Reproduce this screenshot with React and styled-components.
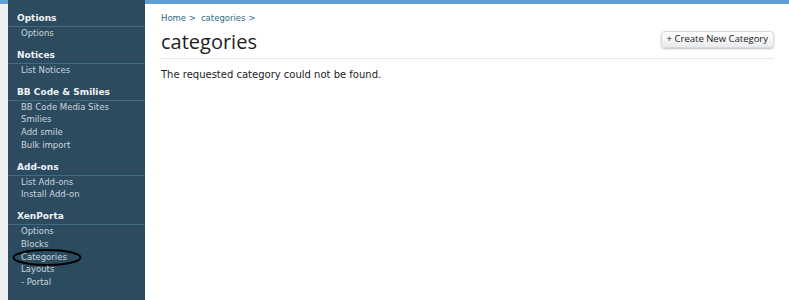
import React from "react";
import styled, { createGlobalStyle } from "styled-components";

const Global = createGlobalStyle`
  html, body { margin: 0; padding: 0; background: #ffffff; }
  body { width: 789px; height: 300px; overflow: hidden; font-family: "DejaVu Sans", Verdana, sans-serif; }
`;

const Page = styled.div`
  display: flex;
  height: 300px;
  position: relative;
`;

const Gutter = styled.div`
  width: 8px;
  flex: none;
  background: #eef0f1;
  border-top: 4px solid #5d9fd6;
`;

const Sidebar = styled.nav`
  width: 137px;
  flex: none;
  background: #2d4b5f;
  padding-top: 12px;
  box-sizing: border-box;
`;

const Section = styled.div`
  margin-bottom: 9px;
`;

const Heading = styled.div`
  font-weight: bold;
  font-size: 9px;
  color: #eef3f6;
  padding: 0 0 2px 9px;
  border-bottom: 1px solid #3f6c86;
  line-height: 12px;
`;

const Item = styled.div`
  font-size: 8.5px;
  color: #c9d6de;
  line-height: 12.75px;
  padding-left: 13px;
  position: relative;
`;

const Main = styled.main`
  flex: 1;
  border-top: 4px solid #5d9fd6;
  padding: 8px 15px 0 16px;
  box-sizing: border-box;
`;

const Crumbs = styled.div`
  font-size: 8.5px;
  color: #2f6a82;
  line-height: 12px;
  display: flex;
  gap: 5px;
`;

const Header = styled.div`
  display: flex;
  align-items: flex-start;
  justify-content: space-between;
  border-bottom: 1px solid #e6e9ec;
  padding: 6px 0 4px;
`;

const Title = styled.h1`
  margin: 0;
  font-family: "Open Sans", sans-serif;
  font-weight: normal;
  font-size: 20px;
  line-height: 24px;
  color: #1e1e1e;
`;

const Button = styled.button`
  font-family: "Open Sans", sans-serif;
  font-size: 9.5px;
  line-height: 12px;
  color: #222;
  padding: 1px 5px 2px;
  border: 1px solid #d8dadd;
  border-radius: 4px;
  background: linear-gradient(#ffffff, #e9ebee);
  box-shadow: 0 1px 2px rgba(0,0,0,0.25);
  margin-top: 1px;
`;

const Message = styled.p`
  margin: 10px 0 0;
  font-size: 10px;
  color: #222;
  font-family: "DejaVu Sans", sans-serif;
`;

const Oval = styled.svg`
  position: absolute;
  left: 4px;
  top: -3px;
  pointer-events: none;
`;

const sections = [
  { title: "Options", items: ["Options"] },
  { title: "Notices", items: ["List Notices"] },
  { title: "BB Code & Smilies", items: ["BB Code Media Sites", "Smilies", "Add smile", "Bulk import"] },
  { title: "Add-ons", items: ["List Add-ons", "Install Add-on"] },
  { title: "XenPorta", items: ["Options", "Blocks", "Categories", "Layouts", "- Portal"] },
];

export default function App() {
  return (
    <>
      <Global />
      <Page>
        <Gutter />
        <Sidebar>
          {sections.map((s) => (
            <Section key={s.title}>
              <Heading>{s.title}</Heading>
              {s.items.map((it) => (
                <Item key={it}>
                  {it}
                  {it === "Categories" && (
                    <Oval width="70" height="19" viewBox="0 0 70 19">
                      <ellipse cx="35" cy="9.5" rx="33.5" ry="7.5" fill="none" stroke="#000" strokeWidth="2" />
                    </Oval>
                  )}
                </Item>
              ))}
            </Section>
          ))}
        </Sidebar>
        <Main>
          <Crumbs>
            <span>Home &gt;</span>
            <span>categories &gt;</span>
          </Crumbs>
          <Header>
            <Title>categories</Title>
            <Button>+ Create New Category</Button>
          </Header>
          <Message>The requested category could not be found.</Message>
        </Main>
      </Page>
    </>
  );
}
